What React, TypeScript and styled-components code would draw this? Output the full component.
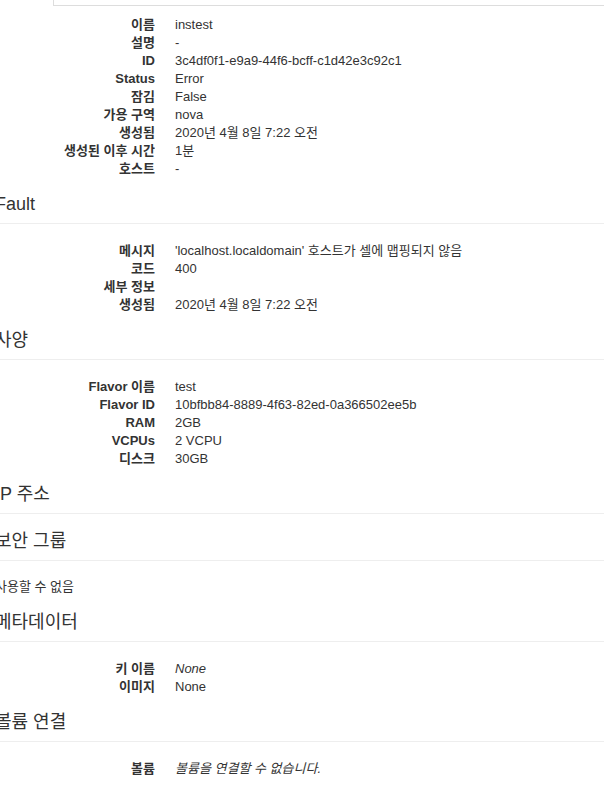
import React from "react";
import styled, { createGlobalStyle } from "styled-components";

const GlobalStyle = createGlobalStyle`
  html, body {
    margin: 0;
    padding: 0;
    background: #fff;
    overflow-x: hidden;
  }
  body {
    font-family: "Liberation Sans", "Noto Sans CJK KR", sans-serif;
    font-size: 13px;
    color: #333;
  }
`;

const Page = styled("div")`
  margin-left: -5px;
  margin-right: -40px;
`;

const TopBox = styled("div")`
  height: 5px;
  margin-left: 58px;
  border-left: 1px solid #ddd;
  border-bottom: 1px solid #ddd;
`;

const DetailList = styled("dl")<{ $first?: boolean }>`
  display: grid;
  grid-template-columns: 160px 1fr;
  column-gap: 20px;
  margin: ${(props) => (props.$first ? "9px" : "0")} 0 -1px;
  padding-top: 1px;
  line-height: 18px;
`;

const Term = styled("dt")`
  font-weight: bold;
  text-align: right;
  white-space: nowrap;
  overflow: hidden;
  text-overflow: ellipsis;
`;

const Value = styled("dd")<{ $italic?: boolean }>`
  margin: 0;
  min-height: 18px;
  font-style: ${(props) => (props.$italic ? "italic" : "normal")};
`;

const Section = styled("section")`
  margin-top: 17px;
`;

const Heading = styled("h4")`
  margin: 0;
  height: 20px;
  font-size: 18px;
  font-weight: normal;
  line-height: 20px;
  color: #333;
`;

const Rule = styled("hr")`
  margin: 9px 0 17px;
  border: 0;
  border-top: 1px solid #eee;
`;

const Note = styled("p")`
  margin: 0 0 -1px;
  line-height: 18px;
`;

type Row = { label: string; value: string; italic?: boolean };

const overview: Row[] = [
  { label: "이름", value: "instest" },
  { label: "설명", value: "-" },
  { label: "ID", value: "3c4df0f1-e9a9-44f6-bcff-c1d42e3c92c1" },
  { label: "Status", value: "Error" },
  { label: "잠김", value: "False" },
  { label: "가용 구역", value: "nova" },
  { label: "생성됨", value: "2020년 4월 8일 7:22 오전" },
  { label: "생성된 이후 시간", value: "1분" },
  { label: "호스트", value: "-" },
];

const fault: Row[] = [
  { label: "메시지", value: "'localhost.localdomain' 호스트가 셀에 맵핑되지 않음" },
  { label: "코드", value: "400" },
  { label: "세부 정보", value: "" },
  { label: "생성됨", value: "2020년 4월 8일 7:22 오전" },
];

const flavor: Row[] = [
  { label: "Flavor 이름", value: "test" },
  { label: "Flavor ID", value: "10bfbb84-8889-4f63-82ed-0a366502ee5b" },
  { label: "RAM", value: "2GB" },
  { label: "VCPUs", value: "2 VCPU" },
  { label: "디스크", value: "30GB" },
];

const metadata: Row[] = [
  { label: "키 이름", value: "None", italic: true },
  { label: "이미지", value: "None" },
];

const volumes: Row[] = [
  { label: "볼륨", value: "볼륨을 연결할 수 없습니다.", italic: true },
];

const Details = ({ rows, first }: { rows: Row[]; first?: boolean }) => (
  <DetailList $first={first}>
    {rows.map((row, i) => (
      <React.Fragment key={i}>
        <Term>{row.label}</Term>
        <Value $italic={row.italic}>{row.value}</Value>
      </React.Fragment>
    ))}
  </DetailList>
);

const Detail = ({ title, children }: { title: string; children?: React.ReactNode }) => (
  <Section>
    <Heading>{title}</Heading>
    <Rule />
    {children}
  </Section>
);

const App = () => {
  return (
    <>
      <GlobalStyle />
      <Page>
        <TopBox />
        <Details rows={overview} first />
        <Detail title="Fault">
          <Details rows={fault} />
        </Detail>
        <Detail title="사양">
          <Details rows={flavor} />
        </Detail>
        <Detail title="IP 주소" />
        <Detail title="보안 그룹">
          <Note>사용할 수 없음</Note>
        </Detail>
        <Detail title="메타데이터">
          <Details rows={metadata} />
        </Detail>
        <Detail title="볼륨 연결">
          <Details rows={volumes} />
        </Detail>
      </Page>
    </>
  );
};

export default App;
